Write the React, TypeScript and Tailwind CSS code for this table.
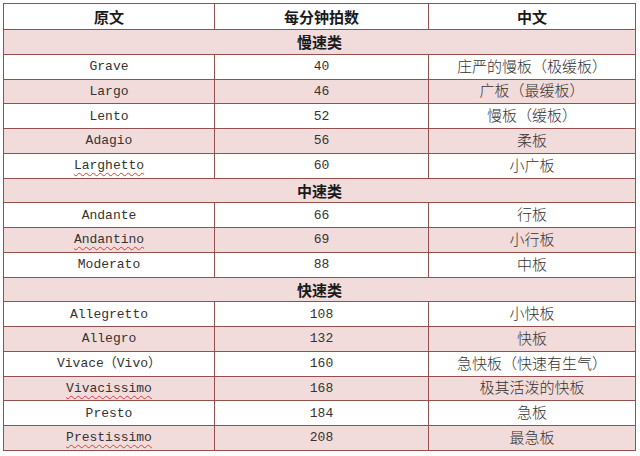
import React from 'react';

type Row =
  | { kind: 'section'; label: string }
  | { kind: 'data'; name: string; bpm: number; zh: string; shaded: boolean; misspelled?: boolean };

const rows: Row[] = [
  { kind: 'section', label: '慢速类' },
  { kind: 'data', name: 'Grave', bpm: 40, zh: '庄严的慢板（极缓板）', shaded: false },
  { kind: 'data', name: 'Largo', bpm: 46, zh: '广板（最缓板）', shaded: true },
  { kind: 'data', name: 'Lento', bpm: 52, zh: '慢板（缓板）', shaded: false },
  { kind: 'data', name: 'Adagio', bpm: 56, zh: '柔板', shaded: true },
  { kind: 'data', name: 'Larghetto', bpm: 60, zh: '小广板', shaded: false, misspelled: true },
  { kind: 'section', label: '中速类' },
  { kind: 'data', name: 'Andante', bpm: 66, zh: '行板', shaded: false },
  { kind: 'data', name: 'Andantino', bpm: 69, zh: '小行板', shaded: true, misspelled: true },
  { kind: 'data', name: 'Moderato', bpm: 88, zh: '中板', shaded: false },
  { kind: 'section', label: '快速类' },
  { kind: 'data', name: 'Allegretto', bpm: 108, zh: '小快板', shaded: false },
  { kind: 'data', name: 'Allegro', bpm: 132, zh: '快板', shaded: true },
  { kind: 'data', name: 'Vivace（Vivo）', bpm: 160, zh: '急快板（快速有生气）', shaded: false },
  { kind: 'data', name: 'Vivacissimo', bpm: 168, zh: '极其活泼的快板', shaded: true, misspelled: true },
  { kind: 'data', name: 'Presto', bpm: 184, zh: '急板', shaded: false },
  { kind: 'data', name: 'Prestissimo', bpm: 208, zh: '最急板', shaded: true, misspelled: true },
];

// Word-style "light shading" table: dark red rules, pink bands
const cell = 'border border-[#93504d] text-center align-middle p-0 leading-none';
const heading = "font-['Noto_Sans_CJK_SC',sans-serif] text-[15px] font-bold text-[#1a1a1a]";
const mono = "font-['Liberation_Mono','Noto_Sans_CJK_SC',monospace] text-[13px] text-[#333]";
const cjk = "font-['Noto_Sans_CJK_SC',sans-serif] text-[15px] font-light text-[#333] pb-[3px]";

export default function App() {
  return (
    <div className="w-[640px] h-[456px] bg-white pt-[3px] pl-[3px]">
      <table className="border-collapse table-fixed w-[632px]">
        <colgroup>
          <col className="w-[211px]" />
          <col className="w-[214px]" />
          <col className="w-[207px]" />
        </colgroup>
        <thead>
          <tr className="h-[26px] bg-white">
            {['原文', '每分钟拍数', '中文'].map((h) => (
              <th key={h} className={`${cell} ${heading}`}>
                {h}
              </th>
            ))}
          </tr>
        </thead>
        <tbody>
          {rows.map((row, i) =>
            row.kind === 'section' ? (
              <tr key={i} className="h-[24.75px] bg-[#f2dbdb]">
                <td colSpan={3} className={`${cell} ${heading}`}>
                  {row.label}
                </td>
              </tr>
            ) : (
              <tr key={i} className={`h-[24.75px] ${row.shaded ? 'bg-[#f2dbdb]' : 'bg-white'}`}>
                <td className={`${cell} ${mono}`}>
                  <span
                    className={
                      row.misspelled
                        ? 'underline decoration-wavy decoration-[#d04040] decoration-1 underline-offset-[3px]'
                        : ''
                    }
                  >
                    {row.name}
                  </span>
                </td>
                <td className={`${cell} ${mono}`}>{row.bpm}</td>
                <td className={`${cell} ${cjk}`}>{row.zh}</td>
              </tr>
            )
          )}
        </tbody>
      </table>
    </div>
  );
}
